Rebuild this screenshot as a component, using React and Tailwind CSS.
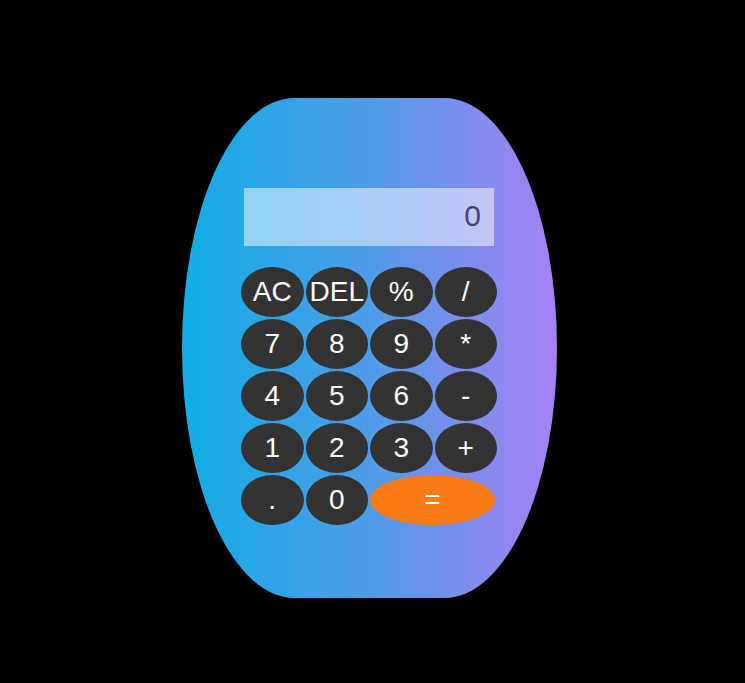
import React from "react";

const keys = [
  "AC", "DEL", "%", "/",
  "7", "8", "9", "*",
  "4", "5", "6", "-",
  "1", "2", "3", "+",
  ".", "0",
];

export default function App() {
  return (
    <div className="w-[745px] h-[683px] bg-black pl-[182px] pt-[98px] overflow-hidden" style={{ fontFamily: '"Liberation Sans", Arial, sans-serif' }}>
      <div className="w-[375px] h-[500px] rounded-[30%/50%] bg-[linear-gradient(to_right,#10ade5,#4f9ce9_50%,#a881f4)] pt-[90px] pl-[59px]">
        <div className="ml-[3px] w-[250px] h-[58px] bg-white/50 flex items-center justify-end pr-[13px] pb-[3px] text-[30px] text-[#3d4477]">
          0
        </div>
        <div className="mt-[21px] w-[256px] grid grid-cols-4 gap-x-[2px] gap-y-[2px]">
          {keys.map((k) => (
            <button key={k} className="h-[50px] rounded-[50%] bg-[#333333] text-white text-[28px] flex items-center justify-center leading-none">
              {k}
            </button>
          ))}
          <button className="col-span-2 mr-[2px] h-[50px] rounded-[50%] bg-[#fa7b16] text-white text-[28px] flex items-center justify-center leading-none">
            =
          </button>
        </div>
      </div>
    </div>
  );
}
